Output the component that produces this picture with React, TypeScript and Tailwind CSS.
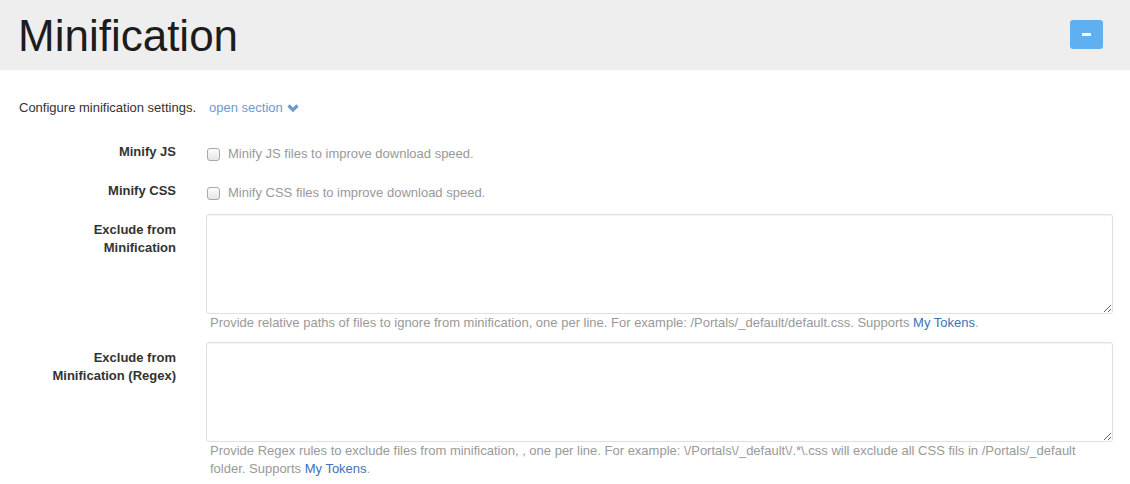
import React from 'react';

const font = { fontFamily: '"Liberation Sans", Arial, Helvetica, sans-serif' };

const CheckRow: React.FC<{ label: string; text: string }> = ({ label, text }) => (
  <div className="flex items-center h-[18px]">
    <div className="w-[176px] text-right font-bold text-[13px] leading-[18px] text-[#333]">{label}</div>
    <div className="ml-[31px] flex items-center translate-y-[2px]">
      <span className="block w-[13px] h-[13px] rounded-[3px] border border-[#a9a9a9] bg-gradient-to-b from-[#fcfcfc] to-[#e6e6e6]" />
      <span className="ml-[8px] text-[13px] leading-[18px] text-[#999]">{text}</span>
    </div>
  </div>
);

const AreaRow: React.FC<{ label: React.ReactNode; help: React.ReactNode; className?: string }> = ({
  label,
  help,
  className = '',
}) => (
  <div className={`flex items-start ${className}`}>
    <div className="w-[176px] pt-[7px] text-right font-bold text-[13px] leading-[18px] text-[#333]">{label}</div>
    <div className="ml-[30px] w-[907px]">
      <textarea className="block w-full h-[100px] rounded-[3px] border border-[#e0e0e0] shadow-[inset_0_1px_1px_rgba(0,0,0,0.05)] bg-white outline-none" />
      <p className="px-[4px] text-[13px] leading-[18px] text-[#999]">{help}</p>
    </div>
  </div>
);

const App: React.FC = () => {
  return (
    <div className="w-[1130px] h-[484px] bg-white overflow-hidden" style={font}>
      {/* Header */}
      <div className="h-[70px] bg-[#eeeeee] flex items-center justify-between pl-[18px] pr-[27px]">
        <h1 className="text-[44px] leading-none font-normal text-[#1c1c1c] translate-y-[1px]">Minification</h1>
        <button className="w-[33px] h-[29px] rounded-[3px] bg-[#5fb0f0] flex items-center justify-center -translate-y-[1px]">
          <span className="block w-[9px] h-[3px] bg-white" />
        </button>
      </div>

      {/* Intro */}
      <div className="mt-[29px] pl-[19px] flex items-center text-[13px] leading-[18px]">
        <span className="text-[#333]">Configure minification settings.</span>
        <span className="ml-[13px] text-[#6a9bd1]">open section</span>
        <svg className="ml-[4px]" width="12" height="10" viewBox="0 0 12 10">
          <polyline points="1.5,2.5 6,7 10.5,2.5" fill="none" stroke="#6a9bd1" strokeWidth="3.2" />
        </svg>
      </div>

      {/* Form */}
      <div className="mt-[26px]">
        <CheckRow label="Minify JS" text="Minify JS files to improve download speed." />
        <div className="mt-[21px]">
          <CheckRow label="Minify CSS" text="Minify CSS files to improve download speed." />
        </div>
        <AreaRow
          className="mt-[14px]"
          label={
            <>
              Exclude from
              <br />
              Minification
            </>
          }
          help={
            <>
              Provide relative paths of files to ignore from minification, one per line. For example:
              /Portals/_default/default.css. Supports <a className="text-[#3c72b8]">My Tokens</a>.
            </>
          }
        />
        <AreaRow
          className="mt-[10px]"
          label={
            <>
              Exclude from
              <br />
              Minification (Regex)
            </>
          }
          help={
            <>
              Provide Regex rules to exclude files from minification, , one per line. For example:
              \/Portals\/_default\/.*\.css will exclude all CSS fils in /Portals/_default folder. Supports{' '}
              <a className="text-[#3c72b8]">My Tokens</a>.
            </>
          }
        />
      </div>
    </div>
  );
};

export default App;
